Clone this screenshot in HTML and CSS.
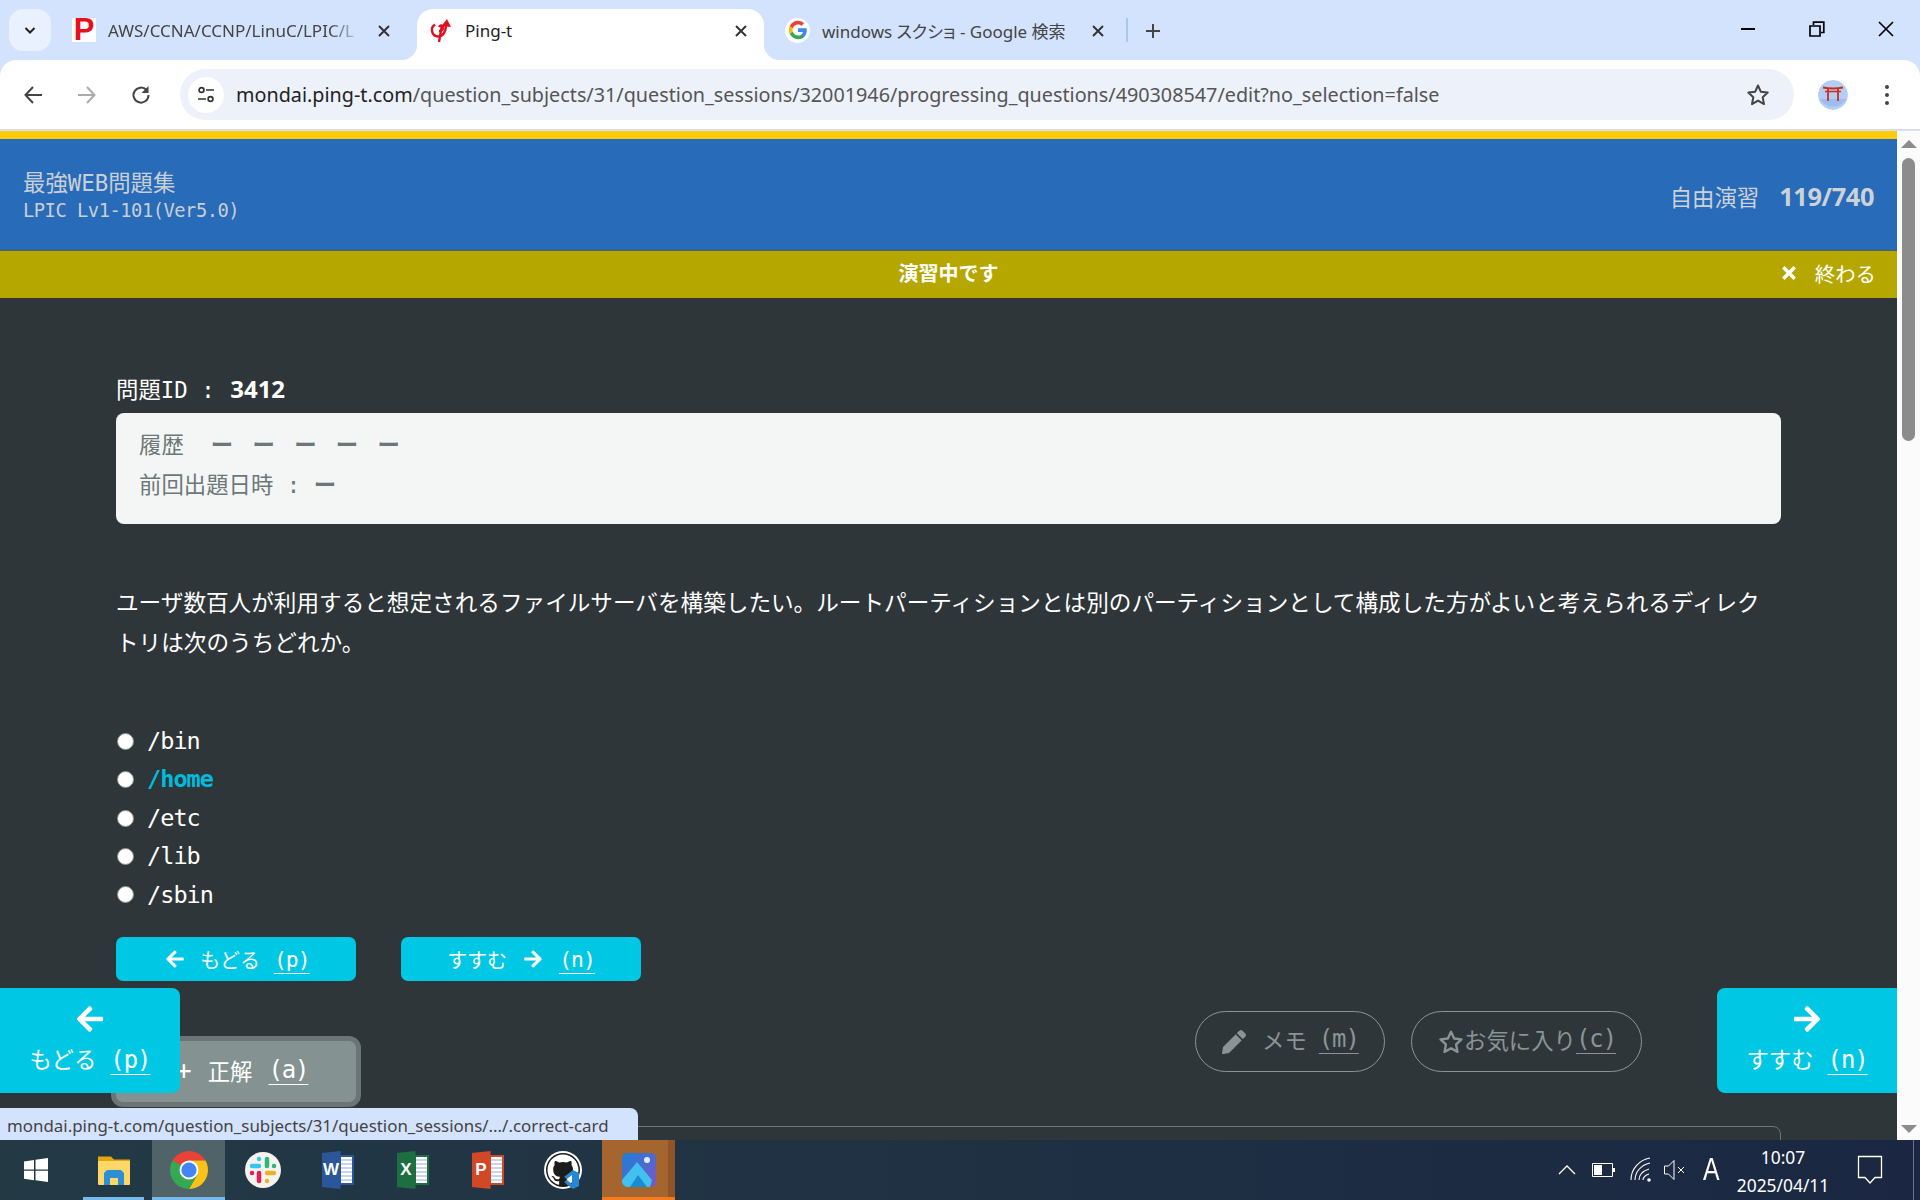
FILE: index.html
```html
<!DOCTYPE html>
<html lang="ja">
<head>
<meta charset="utf-8">
<title>Ping-t</title>
<link rel="stylesheet" href="styles.css">
</head>
<body>
<svg class="defs" width="0" height="0" aria-hidden="true">
  <symbol id="fa-left" viewBox="0 0 448 512"><path fill="currentColor" d="M257.5 445.1l-22.2 22.2c-9.4 9.4-24.6 9.4-33.9 0L7 273c-9.4-9.4-9.4-24.6 0-33.9L201.4 44.7c9.4-9.4 24.6-9.4 33.9 0l22.2 22.2c9.5 9.5 9.3 25-.4 34.3L136.6 216H424c13.3 0 24 10.7 24 24v32c0 13.3-10.7 24-24 24H136.6l120.5 114.8c9.8 9.3 10 24.8.4 34.3z"/></symbol>
  <symbol id="fa-right" viewBox="0 0 448 512"><path fill="currentColor" d="M190.5 66.9l22.2-22.2c9.4-9.4 24.6-9.4 33.9 0L441 239c9.4 9.4 9.4 24.6 0 33.9L246.6 467.3c-9.4 9.4-24.6 9.4-33.9 0l-22.2-22.2c-9.5-9.5-9.3-25 .4-34.3L311.4 296H24c-13.3 0-24-10.7-24-24v-32c0-13.3 10.7-24 24-24h287.4L190.9 101.2c-9.8-9.3-10-24.8-.4-34.3z"/></symbol>
  <symbol id="x-mark" viewBox="0 0 14 14"><path d="M2 2l10 10M12 2L2 12" fill="none" stroke="currentColor"/></symbol>
</svg>

<div class="screen">
  <header class="chrome">
    <div class="tabstrip">
      <button class="tab-list"><svg width="14" height="14" viewBox="0 0 14 14"><path d="M2.500 5l4.500 4.500L11.500 5" fill="none" stroke="#222" stroke-width="2"/></svg></button>
      <div class="tab tab-first">
        <span class="fav fav-p">P</span>
        <span class="tab-title tab-title-fade">AWS/CCNA/CCNP/LinuC/LPIC/L</span>
        <svg class="tab-close" width="14" height="14"><use href="#x-mark"/></svg>
      </div>
      <div class="tab tab-active">
        <svg class="fav" width="24" height="24" viewBox="0 0 24 24"><g fill="none" stroke="#e0101e" stroke-width="2.400"><path d="M6 5.500a6.500 6.500 0 0 0 3 12c5 0 8-5 8-11"/><path d="M10 23l3-17"/><path d="M10 12c3 .5 4.500-2 4-4.500-.8-1.500-3-1.500-4 .5"/></g><path d="M12.500 7L18 0l4 8z" fill="#e0101e"/></svg>
        <span class="tab-title">Ping-t</span>
        <svg class="tab-close" width="14" height="14"><use href="#x-mark"/></svg>
      </div>
      <div class="tab tab-third">
        <span class="fav-g"><svg width="20" height="20" viewBox="0 0 24 24"><path fill="#4285F4" d="M22.56 12.25c0-.78-.07-1.53-.2-2.25H12v4.26h5.92c-.26 1.37-1.04 2.53-2.21 3.31v2.77h3.57c2.08-1.92 3.28-4.74 3.28-8.09z"/><path fill="#34A853" d="M12 23c2.97 0 5.46-.98 7.28-2.66l-3.57-2.77c-.98.66-2.23 1.06-3.71 1.06-2.86 0-5.29-1.93-6.16-4.53H2.18v2.84C3.99 20.53 7.7 23 12 23z"/><path fill="#FBBC05" d="M5.84 14.09c-.22-.66-.35-1.36-.35-2.09s.13-1.43.35-2.09V7.07H2.18C1.43 8.55 1 10.22 1 12s.43 3.45 1.18 4.93l3.66-2.84z"/><path fill="#EA4335" d="M12 5.38c1.62 0 3.06.56 4.21 1.64l3.15-3.15C17.45 2.09 14.97 1 12 1 7.7 1 3.99 3.47 2.18 7.07l3.66 2.84c.87-2.6 3.3-4.53 6.16-4.53z"/></svg></span>
        <span class="tab-title">windows スクショ - Google 検索</span>
        <svg class="tab-close" width="14" height="14"><use href="#x-mark"/></svg>
      </div>
      <span class="tab-sep"></span>
      <svg class="new-tab" width="16" height="16" viewBox="0 0 16 16"><path d="M8 1v14M1 8h14" stroke="#444" stroke-width="2"/></svg>
      <div class="win-controls">
        <span class="win-btn"><svg width="16" height="16" viewBox="0 0 16 16"><path d="M1 8h14" stroke="#000" stroke-width="2"/></svg></span>
        <span class="win-btn"><svg width="16" height="16" viewBox="0 0 16 16"><path d="M1 5h10v10H1zM4.500 4V1.200h10.300v10.300H12" fill="none" stroke="#000" stroke-width="1.700"/></svg></span>
        <span class="win-btn"><svg width="16" height="16" viewBox="0 0 16 16"><path d="M1 1l14 14M15 1L1 15" stroke="#000" stroke-width="1.700"/></svg></span>
      </div>
    </div>
    <div class="toolbar">
      <button class="tool-btn"><svg width="20" height="20" viewBox="0 0 20 20"><path d="M10 2L2.500 10l7.500 8M3 10h16" fill="none" stroke="#444" stroke-width="2"/></svg></button>
      <button class="tool-btn"><svg width="20" height="20" viewBox="0 0 20 20"><path d="M10 2l7.500 8-7.500 8M17 10H1" fill="none" stroke="#aaa" stroke-width="2"/></svg></button>
      <button class="tool-btn"><svg width="20" height="20" viewBox="0 0 20 20"><path d="M15.500 5A7.500 7.500 0 1 0 17.500 10" fill="none" stroke="#444" stroke-width="2"/><path d="M17.500 1v7h-7" fill="#444"/></svg></button>
      <div class="omnibox">
        <span class="site-info"><svg width="20" height="20" viewBox="0 0 20 20"><g fill="none" stroke="#333" stroke-width="1.700"><circle cx="5.500" cy="5" r="2.400"/><path d="M10 5h8M2 14h8"/><circle cx="14.500" cy="14" r="2.400"/></g></svg></span>
        <span class="url"><span class="url-host">mondai.ping-t.com</span>/question_subjects/31/question_sessions/32001946/progressing_questions/490308547/edit?no_selection=false</span>
        <svg class="omni-star" width="24" height="24" viewBox="0 0 24 24"><path d="M12 2.500l2.900 6.300 6.800.8-5 4.700 1.300 6.800-6-3.400-6 3.400 1.300-6.800-5-4.700 6.800-.8z" fill="none" stroke="#444" stroke-width="2" stroke-linejoin="round"/></svg>
      </div>
      <span class="avatar"><svg width="30" height="30" viewBox="0 0 30 30"><circle cx="15" cy="15" r="15" fill="#b5cdf2"/><path d="M2 19h26a15 15 0 0 1-26 0z" fill="#9dbcf2"/><g stroke="#c8301c" fill="none"><path d="M5 7.500c6 1.200 14 1.200 20 0" stroke-width="2"/><path d="M7 11.500h16" stroke-width="1.300"/><path d="M10 8v13M20 8v13" stroke-width="1.800"/></g></svg></span>
      <span class="kebab"><i></i><i></i><i></i></span>
    </div>
  </header>

  <div class="viewport">
    <main class="page">
      <div class="accent"></div>
      <section class="brand-bar">
        <div>
          <div class="brand-name">最強WEB問題集</div>
          <div class="brand-sub">LPIC Lv1-101(Ver5.0)</div>
        </div>
        <div class="progress"><span>自由演習</span><b>119/740</b></div>
      </section>
      <section class="status-bar">
        <strong>演習中です</strong>
        <span class="finish"><svg width="16" height="16"><use href="#x-mark"/></svg><span>終わる</span></span>
      </section>
      <section class="content">
        <div class="qid">問題ID : <b>3412</b></div>
        <div class="history">
          <div class="history-row"><span class="history-label">履歴</span><span class="dashes"><i>ー</i><i>ー</i><i>ー</i><i>ー</i><i>ー</i></span></div>
          <div class="history-row">前回出題日時 : <i class="dash-one">ー</i></div>
        </div>
        <p class="question">ユーザ数百人が利用すると想定されるファイルサーバを構築したい。ルートパーティションとは別のパーティションとして構成した方がよいと考えられるディレクトリは次のうちどれか。</p>
        <ul class="options">
          <li><span class="radio"></span>/bin</li>
          <li class="option-hot"><span class="radio"></span>/home</li>
          <li><span class="radio"></span>/etc</li>
          <li><span class="radio"></span>/lib</li>
          <li><span class="radio"></span>/sbin</li>
        </ul>
        <div class="nav-row">
          <a class="nav-small nav-prev"><svg width="18" height="20"><use href="#fa-left"/></svg><span>もどる</span><u>(p)</u></a>
          <a class="nav-small nav-next"><span>すすむ</span><svg width="18" height="20"><use href="#fa-right"/></svg><u>(n)</u></a>
        </div>
        <div class="actions">
          <a class="answer-btn"><span class="plus">+</span><span>正解</span><u>(a)</u></a>
          <div class="pills">
            <a class="pill pill-memo"><svg width="24" height="24" viewBox="0 0 512 512"><path fill="currentColor" d="M497.900 142.100l-46.100 46.100c-4.700 4.700-12.300 4.700-17 0l-111-111c-4.700-4.700-4.700-12.300 0-17l46.100-46.100c18.700-18.700 49.100-18.700 67.900 0l60.100 60.100c18.800 18.700 18.800 49.100 0 67.900zM284.200 99.800L21.600 362.400.4 483.900c-2.900 16.400 11.400 30.600 27.800 27.800l121.500-21.300 262.600-262.600c4.700-4.700 4.700-12.300 0-17l-111-111c-4.800-4.700-12.400-4.700-17.100 0z"/></svg><span>メモ</span><u>(m)</u></a>
            <a class="pill pill-fav"><svg width="26" height="26" viewBox="0 0 24 24"><path d="M12 2.500l2.900 6.300 6.800.8-5 4.700 1.300 6.800-6-3.400-6 3.400 1.300-6.800-5-4.700 6.800-.8z" fill="none" stroke="currentColor" stroke-width="2.200" stroke-linejoin="round"/></svg><span>お気に入り</span><u>(c)</u></a>
          </div>
        </div>
        <div class="correct-card"></div>
      </section>
      <a class="float-nav float-left"><svg width="30" height="30"><use href="#fa-left"/></svg><span class="float-label"><span>もどる</span><u>(p)</u></span></a>
      <a class="float-nav float-right"><svg width="30" height="30"><use href="#fa-right"/></svg><span class="float-label"><span>すすむ</span><u>(n)</u></span></a>
      <div class="status-bubble">mondai.ping-t.com/question_subjects/31/question_sessions/.../.correct-card</div>
    </main>
    <aside class="scrollbar">
      <span class="scroll-up"></span>
      <span class="scroll-thumb"></span>
      <span class="scroll-down"></span>
    </aside>
  </div>

  <footer class="taskbar">
    <span class="task task-start"><svg width="26" height="26" viewBox="0 0 26 26"><path fill="#fff" d="M1 4.500l10-1.500v9.400H1zM12.500 2.800L25 1v11.400H12.500zM1 13.800h10v9.400L1 21.700zM12.500 13.800H25V25l-12.500-1.800z"/></svg></span>
    <span class="task task-open"><svg width="34" height="34" viewBox="0 0 34 34"><path d="M1 3.500h13l3 3h16v23H1z" fill="#e2a60e"/><path d="M1 8h32v23a1 1 0 0 1-1 1H2a1 1 0 0 1-1-1z" fill="#fdd768"/><path d="M7 32V20l3-3h14l3 3v12h-6v-7h-8v7z" fill="#2d8fd5"/></svg></span>
    <span class="task task-active"><svg width="38" height="38" viewBox="4 4 40 40"><path fill="#ea4335" d="M6.680 14A20 20 0 0 1 41.320 14H24l-8.660 5z"/><path fill="#fbc116" d="M41.320 14A20 20 0 0 1 24 44l8.660-15L24 14z"/><path fill="#34a853" d="M24 44A20 20 0 0 1 6.680 14l8.660 5 17.320 10z"/><circle cx="24" cy="24" r="10" fill="#fff"/><circle cx="24" cy="24" r="8" fill="#4285f4"/></svg></span>
    <span class="task"><svg width="36" height="36" viewBox="0 0 36 36"><circle cx="18" cy="18" r="18" fill="#f4f3ee"/><g stroke-width="4.500" stroke-linecap="round" fill="none"><path d="M14 7v0M14 14H7" stroke="#36c5f0"/><path d="M22 7v7M29 14v0" stroke="#2eb67d"/><path d="M29 21h-7M22 29v0" stroke="#ecb22e"/><path d="M14 29v-8M7 21v0" stroke="#e01e5a"/></g></svg></span>
    <span class="task"><span class="office office-word"><i class="office-sheet"></i><b>W</b></span></span>
    <span class="task"><span class="office office-excel"><i class="office-sheet"></i><b>X</b></span></span>
    <span class="task"><span class="office office-ppt"><i class="office-sheet"></i><b>P</b></span></span>
    <span class="task"><svg width="38" height="38" viewBox="0 0 38 38"><circle cx="19" cy="19" r="19" fill="#fff"/><circle cx="19" cy="19" r="17" fill="#1c1c1c"/><g transform="translate(3.500 3.500) scale(1.940)"><path fill="#fff" d="M8 0C3.580 0 0 3.580 0 8c0 3.540 2.290 6.530 5.470 7.590.4.070.55-.17.55-.38 0-.19-.01-.82-.01-1.490-2.010.37-2.530-.49-2.690-.94-.09-.23-.48-.94-.82-1.130-.28-.15-.68-.52-.01-.53.63-.01 1.080.58 1.230.82.720 1.210 1.870.87 2.330.66.070-.52.28-.87.51-1.070-1.780-.2-3.640-.89-3.640-3.950 0-.87.31-1.590.82-2.150-.08-.2-.36-1.020.08-2.120 0 0 .67-.21 2.200.82.64-.18 1.320-.27 2-.27.680 0 1.360.09 2 .27 1.530-1.040 2.200-.82 2.200-.82.44 1.100.16 1.920.08 2.120.51.56.82 1.270.82 2.150 0 3.070-1.870 3.750-3.650 3.950.29.25.54.73.54 1.480 0 1.070-.01 1.930-.01 2.200 0 .21.15.46.55.38A8.013 8.013 0 0 0 16 8c0-4.420-3.580-8-8-8z"/></g><path d="M29 19l6 3v13l-6 3-9-7 3-2 5 4V24l-5 4-3-2z" fill="#2688d4"/></svg></span>
    <span class="task task-photos"><svg width="34" height="34" viewBox="0 0 34 34"><defs><linearGradient id="ph" x1="0" y1="0" x2="1" y2="1"><stop offset="0" stop-color="#1c7fd8"/><stop offset="1" stop-color="#7d55c7"/></linearGradient></defs><rect width="34" height="34" rx="5" fill="url(#ph)"/><circle cx="25" cy="7" r="3" fill="#dcefff"/><path d="M0 27L15 9l15 18-2 7H6a6 6 0 0 1-6-7z" fill="#41c1ee"/><path d="M8 34l8-12 9 12z" fill="#1b8bd6"/></svg></span>
    <div class="tray">
      <svg width="18" height="18" viewBox="0 0 18 18"><path d="M1 13l8-8 8 8" fill="none" stroke="#fff" stroke-width="1.300"/></svg>
      <svg class="tray-battery" width="24" height="16" viewBox="0 0 24 16"><path d="M.5 1.500h20v13H.5z" fill="none" stroke="#fff"/><path d="M2 3h8v10H2zM21 6h2v4h-2z" fill="#fff"/></svg>
      <svg class="tray-wifi" width="22" height="26" viewBox="0 0 22 26"><g fill="none" stroke="#fff" stroke-width="1.100"><path d="M1 23C1 12 9 3 20 1"/><path d="M5 23C5 15 11 8 20 6"/><path d="M9 23c0-5 4-9 10-11"/><path d="M13 23c0-2 2-5 6-6"/></g><circle cx="19" cy="23" r="1.800" fill="#fff"/></svg>
      <svg class="tray-sound" width="22" height="24" viewBox="0 0 22 24"><path d="M.5 8h4L10 2.500v19L4.500 16h-4z" fill="none" stroke="#fff"/><path d="M14 9l6 6M20 9l-6 6" stroke="#fff"/></svg>
      <span class="tray-ime">A</span>
      <div class="clock"><div>10:07</div><div>2025/04/11</div></div>
      <svg class="tray-notify" width="26" height="30" viewBox="0 0 26 30"><path d="M1.500 1.500h23v21h-6.500L13 28l-5-5.500H1.500z" fill="none" stroke="#fff" stroke-width="1.300"/></svg>
    </div>
  </footer>
</div>
</body>
</html>
```

FILE: styles.css
```css
* { box-sizing: border-box; }
html, body { margin: 0; padding: 0; width: 1920px; height: 1200px; overflow: hidden; }
body { font-family: "Noto Sans", "Noto Sans CJK JP", sans-serif; background: #d3e3fd; }
.defs { display: block; height: 0; }
.screen { display: flex; flex-direction: column; width: 1920px; height: 1200px; }
button { border: 0; background: none; padding: 0; }
u { font-size: 1.07em; letter-spacing: -.045em; text-underline-offset: 6px; text-decoration-thickness: 1px; }

.chrome { flex: none; height: 131px; background: #d3e3fd; }
.tabstrip { display: flex; align-items: flex-end; height: 60px; padding-left: 9px; }
.tab-list { width: 42px; height: 42px; margin: 0 9px 9px 0; border-radius: 14px; background: #e9f0fe; display: flex; align-items: center; justify-content: center; }
.tab { position: relative; display: flex; align-items: center; height: 51px; padding: 0 0 9px 0; font-size: 17px; color: #444; }
.tab-first { width: 357px; padding-left: 12px; }
.tab-active { width: 347px; padding-left: 12px; background: #fff; color: #222; border-radius: 16px 16px 0 0; padding-bottom: 8px; }
.tab-active::before, .tab-active::after { content: ""; position: absolute; bottom: 0; width: 16px; height: 16px; }
.tab-active::before { left: -16px; background: radial-gradient(circle at 0 0, transparent 16px, #fff 16.500px); }
.tab-active::after { right: -16px; background: radial-gradient(circle at 100% 0, transparent 16px, #fff 16.500px); }
.tab-third { width: 352px; padding-left: 21px; }
.fav { flex: none; width: 24px; height: 24px; }
.fav-p { background: #fff; color: #e9101d; font: 700 31px/24px "Liberation Sans", sans-serif; text-align: center; }
.fav-g { flex: none; width: 25px; height: 25px; border-radius: 50%; background: #fff; display: flex; align-items: center; justify-content: center; }
.tab-title { flex: none; margin-left: 12px; white-space: nowrap; font-feature-settings: "palt"; }
.tab-title-fade { -webkit-mask-image: linear-gradient(90deg, #000 90%, rgba(0,0,0,.25)); mask-image: linear-gradient(90deg, #000 90%, rgba(0,0,0,.25)); }
.tab-close { flex: none; position: absolute; right: 16px; top: 15px; color: #333; stroke-width: 2; }
.tab-first .tab-close { right: 26px; }
.tab-third .tab-close { right: auto; left: 327px; }
.tab-sep { flex: none; width: 2px; height: 24px; margin: 0 0 18px 10px; background: #a9c7f5; }
.new-tab { flex: none; margin: 0 0 21px 17px; }
.win-controls { display: flex; margin-left: auto; align-self: flex-start; }
.win-btn { display: flex; align-items: center; justify-content: center; width: 69px; height: 58px; }

.toolbar { display: flex; align-items: center; height: 69px; padding: 0 12px 0 15px; background: #fff; border-radius: 16px 16px 0 0; box-shadow: 0 1px 0 #dcdcdc; }
.tool-btn { flex: none; width: 36px; height: 36px; margin-right: 18px; display: flex; align-items: center; justify-content: center; }
.tool-btn:nth-child(3) { margin-right: 21px; }
.omnibox { flex: none; display: flex; align-items: center; width: 1614px; height: 51px; padding: 0 24px 0 8px; background: #ecf1fa; border-radius: 26px; }
.site-info { flex: none; display: flex; align-items: center; justify-content: center; width: 36px; height: 36px; background: #fff; border-radius: 50%; }
.url { margin-left: 12px; font-size: 19.770px; color: #555; white-space: nowrap; }
.url-host { color: #222; }
.omni-star { margin-left: auto; }
.avatar { flex: none; width: 30px; height: 30px; margin-left: 24px; border-radius: 50%; overflow: hidden; }
.kebab { flex: none; display: flex; flex-direction: column; gap: 4px; margin-left: 37px; }
.kebab i { display: block; width: 4px; height: 4px; border-radius: 50%; background: #444; }

.viewport { flex: 1; display: flex; min-height: 0; }
.page { position: relative; flex: 1; min-width: 0; overflow: hidden; background: #2f3639; color: #fff; font-family: "DejaVu Sans Mono", "Noto Sans CJK JP", monospace; }
.accent { height: 8px; background: #ffca08; }
.brand-bar { display: flex; align-items: center; justify-content: space-between; height: 111px; padding: 3px 23px 0; background: #286bb8; color: #c9cfd6; }
.brand-name { font-size: 22.400px; line-height: 30px; }
.brand-sub { font-size: 18.800px; letter-spacing: -.5px; line-height: 26px; }
.progress { display: flex; align-items: center; gap: 20px; font-size: 22.400px; font-family: "Noto Sans CJK JP", sans-serif; color: #ccd2d8; }
.progress b { font: 700 25.400px "Open Sans", sans-serif; letter-spacing: -.4px; }
.status-bar { position: relative; display: flex; align-items: center; justify-content: center; height: 48px; padding-bottom: 4px; background: #b5a700; font-family: "Noto Sans CJK JP", sans-serif; font-size: 20px; border-top: 1px solid #52604d; }
.finish { position: absolute; right: 21px; top: 0; bottom: 4px; display: flex; align-items: center; gap: 18px; font-size: 20.400px; stroke-width: 3; }

.content { padding: 76px 116px 0; }
.qid { height: 30px; font-size: 22.400px; line-height: 30px; }
.qid b { margin-left: 2px; font: 700 24px/30px "Open Sans", sans-serif; }
.history { margin-top: 9px; height: 111px; padding: 12px 23px 0; border-radius: 8px; background: #f4f6f6; color: #6b7877; font-size: 22.400px; }
.history-row { height: 40px; line-height: 40px; white-space: pre; }
.history-label { margin-right: 27px; }
.dashes { display: inline-flex; gap: 19.300px; }
.dashes i, .dash-one { font-style: normal; font-weight: 700; }
.question { margin: 58px 0 0; font-family: "Noto Sans CJK JP", sans-serif; font-size: 22.610px; line-height: 40px; }
.options { margin: 60px 0 0; padding: 0; list-style: none; font-size: 23.500px; letter-spacing: -.95px; line-height: 38.400px; }
.options li { display: flex; align-items: center; }
.radio { flex: none; width: 17px; height: 17px; margin: 0 13px 0 1px; border-radius: 50%; background: #fff; border: 1px solid #8d8d8d; }
.option-hot { color: #00bcdc; font-weight: 700; }

.nav-row { display: flex; gap: 45px; margin-top: 23px; }
.nav-small { display: flex; align-items: center; justify-content: center; gap: 14px; width: 240px; height: 44px; border-radius: 7px; background: #00c7e3; color: #fff; font-size: 20px; }
.nav-prev { padding-left: 4px; }
.nav-prev svg { margin-right: 2px; }
.nav-next { gap: 17px; }
.actions { display: flex; justify-content: space-between; align-items: flex-start; margin-top: 30px; height: 96px; padding-right: 139px; }
.answer-btn { display: flex; align-items: center; gap: 16px; width: 250px; height: 71px; margin: 25px 0 0 -5px; padding: 0 0 4px 60px; border: 5px solid #6c7575; border-radius: 12px; background: #849291; font-size: 22.400px; }
.plus { font-size: 26px; }
.pills { display: flex; gap: 26px; }
.pill { display: flex; align-items: center; height: 61px; padding-bottom: 6px; border: 1px solid #8a9494; border-radius: 31px; color: #8a9494; font-size: 22.400px; }
.pill svg { margin-top: 6px; }
.pill-memo { width: 190px; padding-left: 26px; gap: 16px; }
.pill-memo u { margin-left: -4px; }
.pill-fav { width: 231px; padding-left: 26px; gap: 0; }
.correct-card { height: 200px; margin-top: 19px; border: 1px solid #6c7575; border-radius: 8px; }

.float-nav { position: absolute; bottom: 47px; display: flex; flex-direction: column; align-items: center; justify-content: center; gap: 10px; width: 180px; height: 105px; padding-bottom: 1px; background: #00c7e3; color: #fff; font-size: 22.400px; }
.float-left { left: 0; border-radius: 0 8px 8px 0; }
.float-right { right: 0; border-radius: 8px 0 0 8px; }
.float-label { display: flex; gap: 14px; line-height: 32px; }
.status-bubble { position: absolute; left: 0; bottom: 0; width: 638px; height: 32px; padding: 3px 0 0 7px; border-radius: 0 8px 0 0; background: #d3e3fd; color: #444; font: 16.900px/29px "Noto Sans", sans-serif; white-space: nowrap; }

.scrollbar { position: relative; flex: none; width: 23px; background: #fbfbfb; }
.scroll-up { position: absolute; left: 4px; top: 9px; border: 8px solid transparent; border-top: 0; border-bottom: 8px solid #8c8c8c; }
.scroll-thumb { position: absolute; left: 5px; top: 27px; width: 13px; height: 283px; border-radius: 7px; background: #8c8c8c; }
.scroll-down { position: absolute; left: 4px; bottom: 7px; border: 8px solid transparent; border-bottom: 0; border-top: 8px solid #8c8c8c; }

.taskbar { flex: none; display: flex; align-items: center; height: 60px; padding-right: 6px; background: linear-gradient(90deg, #233a45, #1b2742); color: #fff; }
.task { flex: none; display: flex; align-items: center; justify-content: center; width: 75px; height: 60px; }
.task-start { width: 72px; }
.task-open { width: 61px; margin: 0 8px 0 11px; box-shadow: inset 0 -3px 0 #76b9ed; }
.task-active { width: 73px; background: #4f6369; box-shadow: inset 0 -3px 0 #76b9ed; }
.task-photos { width: 73px; margin-left: 2px; background: linear-gradient(90deg, #a5652f 90%, #8f5526 90%); box-shadow: inset 0 -3px 0 #f4791f; }
.office { position: relative; display: block; width: 32px; height: 42px; }
.office b { position: absolute; left: 0; top: 2px; width: 19px; height: 38px; display: flex; align-items: center; justify-content: center; font: 700 17px "Liberation Sans", sans-serif; color: #fff; clip-path: polygon(0 5%, 100% 0, 100% 100%, 0 95%); }
.office-sheet { position: absolute; right: 0; top: 6px; width: 15px; height: 30px; background: repeating-linear-gradient(180deg, #fff 0 2px, #c9d5e6 2px 4px); }
.office-word b { background: #2b579a; } .office-word .office-sheet { border: 2px solid #2b579a; }
.office-excel b { background: #1d6f42; } .office-excel .office-sheet { border: 2px solid #1d6f42; }
.office-ppt b { background: #d24726; } .office-ppt .office-sheet { border: 2px solid #d24726; }
.tray { display: flex; align-items: center; height: 60px; margin-left: auto; padding-right: 30px; border-right: 1px solid #6a7488; }
.tray-battery { margin-left: 16px; }
.tray-wifi { margin-left: 14px; }
.tray-sound { margin-left: 12px; }
.tray-ime { margin-left: 14.500px; width: 20px; font: 31px/32px "Liberation Sans", sans-serif; transform: scaleX(.8); }
.clock { width: 112px; margin-left: 6.500px; padding-top: 2px; text-align: center; font: 17.400px/28px "Noto Sans", sans-serif; }
.tray-notify { margin-left: 18px; }
```
